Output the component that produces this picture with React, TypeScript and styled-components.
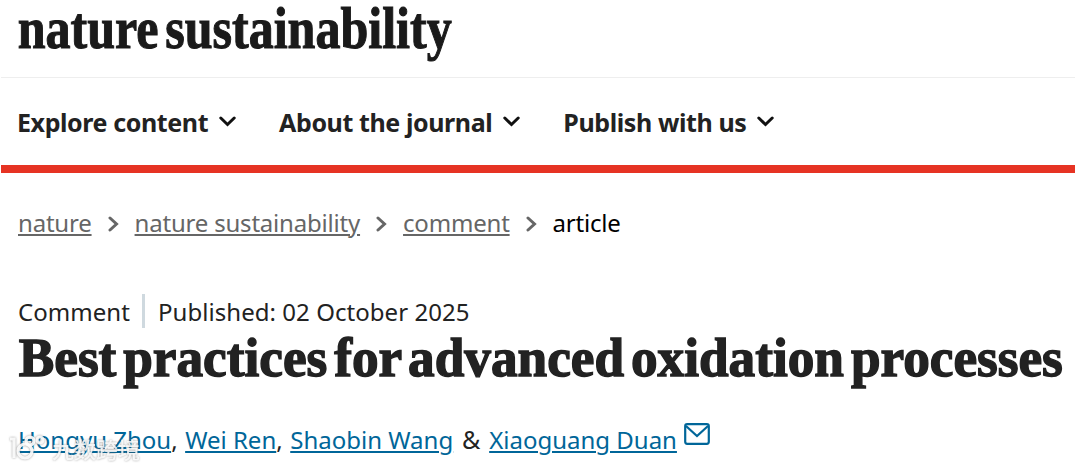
import styled, { createGlobalStyle } from "styled-components";

const GlobalStyle = createGlobalStyle`
  body {
    margin: 0;
    background: #ffffff;
    color: #222222;
    font-family: "Noto Sans", "Open Sans", sans-serif;
    font-size: 24px;
    overflow: hidden;
  }
`;

const Page = styled.div`
  width: 1074px;
  height: 468px;
  padding-left: 1px;
`;

const Masthead = styled.header`
  height: 77px;
  border-bottom: 1px solid #eeeeee;
`;

const Logo = styled.div`
  width: max-content;
  padding-left: 20px;
  color: #1a1a1a;
  font: bold 60px/57px "Liberation Serif", serif;
  white-space: nowrap;
  word-spacing: -7px;
  -webkit-text-stroke: 1.1px #1a1a1a;
  transform: scaleX(0.834);
  transform-origin: left top;
`;

const Nav = styled.nav`
  display: flex;
  align-items: center;
  gap: 43px;
  height: 87px;
  padding-left: 16px;
  border-bottom: 8px solid #e63323;
`;

const NavItem = styled.a`
  display: flex;
  align-items: center;
  gap: 11px;
  font-size: 25px;
  font-weight: 700;
  white-space: nowrap;
  letter-spacing: -0.4px;
`;

const Breadcrumbs = styled.div`
  display: flex;
  align-items: center;
  height: 98px;
  padding-left: 17px;
  color: #000000;
  letter-spacing: -0.2px;
`;

const Link = styled.a<{ $color: string }>`
  color: ${(p) => p.$color};
  text-decoration: underline;
  text-decoration-thickness: 2px;
  text-underline-offset: 2px;
  white-space: nowrap;
`;

const Separator = styled.svg`
  margin: 0 16px;
`;

const Meta = styled.div`
  display: flex;
  align-items: center;
  height: 34px;
  margin-top: 23px;
  padding-left: 17px;
  letter-spacing: 0.05px;
`;

const Divider = styled.span`
  width: 3px;
  height: 34px;
  margin: 0 13px 0 12px;
  background: #cfd9df;
`;

const Title = styled.h1`
  width: max-content;
  margin: 0;
  padding-left: 18px;
  font: bold 54px/60px "Liberation Serif", serif;
  white-space: nowrap;
  word-spacing: -6.5px;
  -webkit-text-stroke: 1.4px #222222;
  transform: scaleX(0.986);
  transform-origin: left top;
`;

const Authors = styled.div`
  display: flex;
  align-items: center;
  height: 40px;
  margin-top: 31px;
  padding-left: 17px;
`;

const Comma = styled.span`
  width: 14px;
`;

const Ampersand = styled.span`
  width: 36px;
  font-size: 25px;
  text-align: center;
`;

const Mail = styled.svg`
  margin: -11px 0 0 7px;
`;

const Watermark = styled.div`
  position: absolute;
  left: 9px;
  top: 431px;
  display: flex;
  align-items: center;
  gap: 7px;
  color: rgba(255, 255, 255, 0.85);
  font: 500 22px/34px "Noto Sans CJK SC", sans-serif;
  filter: drop-shadow(0 0 1px rgba(80, 80, 80, 0.6));
`;

const navItems = ["Explore content", "About the journal", "Publish with us"];

const crumbs = ["nature", "nature sustainability", "comment"];

const Chevron = () => (
  <svg width="17" height="12" viewBox="0 0 17 12">
    <path
      d="M1.8 2 8.5 8.5 15.2 2"
      fill="none"
      stroke="#111"
      strokeWidth="3"
      strokeLinecap="round"
    />
  </svg>
);

const App = () => {
  return (
    <>
      <GlobalStyle />
      <Page>
        <Masthead>
          <Logo>nature sustainability</Logo>
        </Masthead>
        <Nav>
          {navItems.map((label) => (
            <NavItem key={label}>
              {label}
              <Chevron />
            </NavItem>
          ))}
        </Nav>
        <Breadcrumbs>
          {crumbs.map((label) => (
            <span key={label}>
              <Link $color="#666666">{label}</Link>
              <Separator width="11" height="16" viewBox="0 0 11 16">
                <path
                  d="M2 2 8.5 8 2 14"
                  fill="none"
                  stroke="#666"
                  strokeWidth="3"
                  strokeLinecap="round"
                />
              </Separator>
            </span>
          ))}
          <span>article</span>
        </Breadcrumbs>
        <Meta>
          <span>Comment</span>
          <Divider />
          <span>Published: 02 October 2025</span>
        </Meta>
        <Title>Best practices for advanced oxidation processes</Title>
        <Authors>
          <Link $color="#006699">Hongyu Zhou</Link>
          <Comma>,</Comma>
          <Link $color="#006699">Wei Ren</Link>
          <Comma>,</Comma>
          <Link $color="#006699">Shaobin Wang</Link>
          <Ampersand>&amp;</Ampersand>
          <Link $color="#006699">Xiaoguang Duan</Link>
          <Mail width="26" height="22" viewBox="0 0 26 22">
            <rect x="1.2" y="1.2" width="23.6" height="19.6" rx="2" fill="none" stroke="#069" strokeWidth="2.2" />
            <path d="M2 3 13 13 24 3" fill="none" stroke="#069" strokeWidth="2.2" />
          </Mail>
        </Authors>
      </Page>
      <Watermark>
        <svg width="36" height="26" viewBox="0 0 36 26">
          <g fill="none" stroke="rgba(255,255,255,0.9)" strokeWidth="3.2">
            <path d="M1 4H5V23" />
            <circle cx="16" cy="16" r="7" />
            <circle cx="21" cy="6" r="4" />
            <circle cx="31" cy="5" r="3" />
          </g>
        </svg>
        九数跨境
      </Watermark>
    </>
  );
};

export default App;
